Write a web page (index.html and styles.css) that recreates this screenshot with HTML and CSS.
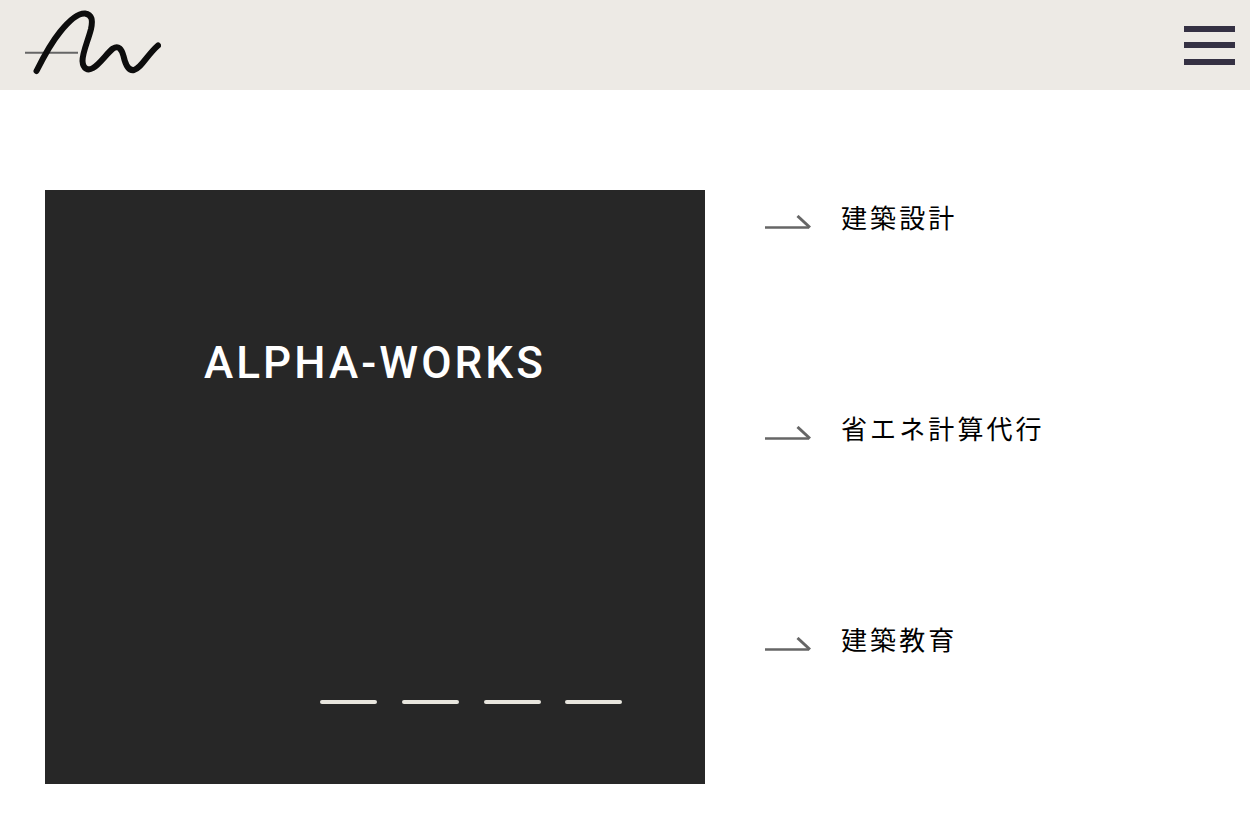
FILE: index.html
```html
<!DOCTYPE html>
<html lang="ja">
<head>
  <meta charset="UTF-8" />
  <meta name="viewport" content="width=device-width, initial-scale=1.0"/>
  <title>ALPHA-WORKS</title>
  <link rel="stylesheet" href="styles.css">
</head>
<body>
  <header>
    <a class="logo" href="#">
      <svg width="136" height="66" viewBox="25 10 136 66" fill="none">
        <path d="M25 52.800H78" stroke="#666" stroke-width="2"/>
        <path d="M36.500 71C43 58 51 43 60 32C68 22 77 13 85 13.500C92 14.500 93 20 91 29C88 41 82.500 52 82.500 61C83 69 88 71 93 68C100 64 107 53 113 48.500C118.500 45 121.500 49 123.500 56C125.500 65 129 71 134 70C141 68.500 147 55 158 45.500" stroke="#0d0d0d" stroke-width="6" stroke-linecap="round" stroke-linejoin="round"/>
      </svg>
    </a>
    <button class="burger" type="button" aria-label="menu">
      <span></span>
      <span></span>
      <span></span>
    </button>
  </header>

  <main>
    <section class="hero">
      <h1>ALPHA-WORKS</h1>
      <div class="dashes">
        <span></span>
        <span></span>
        <span></span>
        <span></span>
      </div>
    </section>

    <ul class="services">
      <li>
        <svg class="arrow" width="46" height="14" viewBox="0 0 46 14" fill="none"><path d="M0 12.500H44" stroke="#666" stroke-width="2.400"/><path d="M32.500 1L45 12.500" stroke="#666" stroke-width="3"/></svg>
        <a href="#">建築設計</a>
      </li>
      <li>
        <svg class="arrow" width="46" height="14" viewBox="0 0 46 14" fill="none"><path d="M0 12.500H44" stroke="#666" stroke-width="2.400"/><path d="M32.500 1L45 12.500" stroke="#666" stroke-width="3"/></svg>
        <a href="#">省エネ計算代行</a>
      </li>
      <li>
        <svg class="arrow" width="46" height="14" viewBox="0 0 46 14" fill="none"><path d="M0 12.500H44" stroke="#666" stroke-width="2.400"/><path d="M32.500 1L45 12.500" stroke="#666" stroke-width="3"/></svg>
        <a href="#">建築教育</a>
      </li>
    </ul>
  </main>
</body>
</html>
```

FILE: styles.css
```css
html, body {
  margin: 0;
  padding: 0;
  background: white;
  color: black;
  font-family: "Noto Sans CJK JP", sans-serif;
}

header {
  display: flex;
  justify-content: space-between;
  align-items: center;
  height: 90px;
  background: #edeae5;
  padding: 0 15px 0 25px;
  box-sizing: border-box;
}

.logo {
  display: block;
  height: 66px;
  margin-top: -4px;
}

.burger {
  display: flex;
  flex-direction: column;
  gap: 10.500px;
  width: 51px;
  padding: 0;
  border: 0;
  background: none;
}

.burger span {
  display: block;
  height: 6px;
  background: #353143;
}

main {
  display: flex;
  align-items: flex-start;
  gap: 60px;
  padding: 100px 0 29px 45px;
}

.hero {
  display: flex;
  flex-direction: column;
  width: 660px;
  height: 594px;
  background: #272727;
  color: white;
}

.hero h1 {
  margin: 144px 0 0;
  font-family: Roboto, sans-serif;
  font-size: 44px;
  font-weight: 500;
  line-height: 58px;
  letter-spacing: 3.100px;
  text-align: center;
}

.dashes {
  display: flex;
  gap: 24.800px;
  margin-top: auto;
  margin-bottom: 80px;
  padding-left: 275px;
}

.dashes span {
  width: 57px;
  height: 4px;
  border-radius: 2px;
  background: #e8e6de;
}

.services {
  list-style: none;
  margin: 0;
  padding: 0;
}

.services li {
  display: flex;
  align-items: flex-start;
  gap: 30px;
  height: 211px;
}

.arrow {
  margin-top: 25px;
}

.services a {
  margin-top: -1px;
  color: black;
  text-decoration: none;
  font-size: 26px;
  line-height: 56px;
  letter-spacing: 3.100px;
}
```
